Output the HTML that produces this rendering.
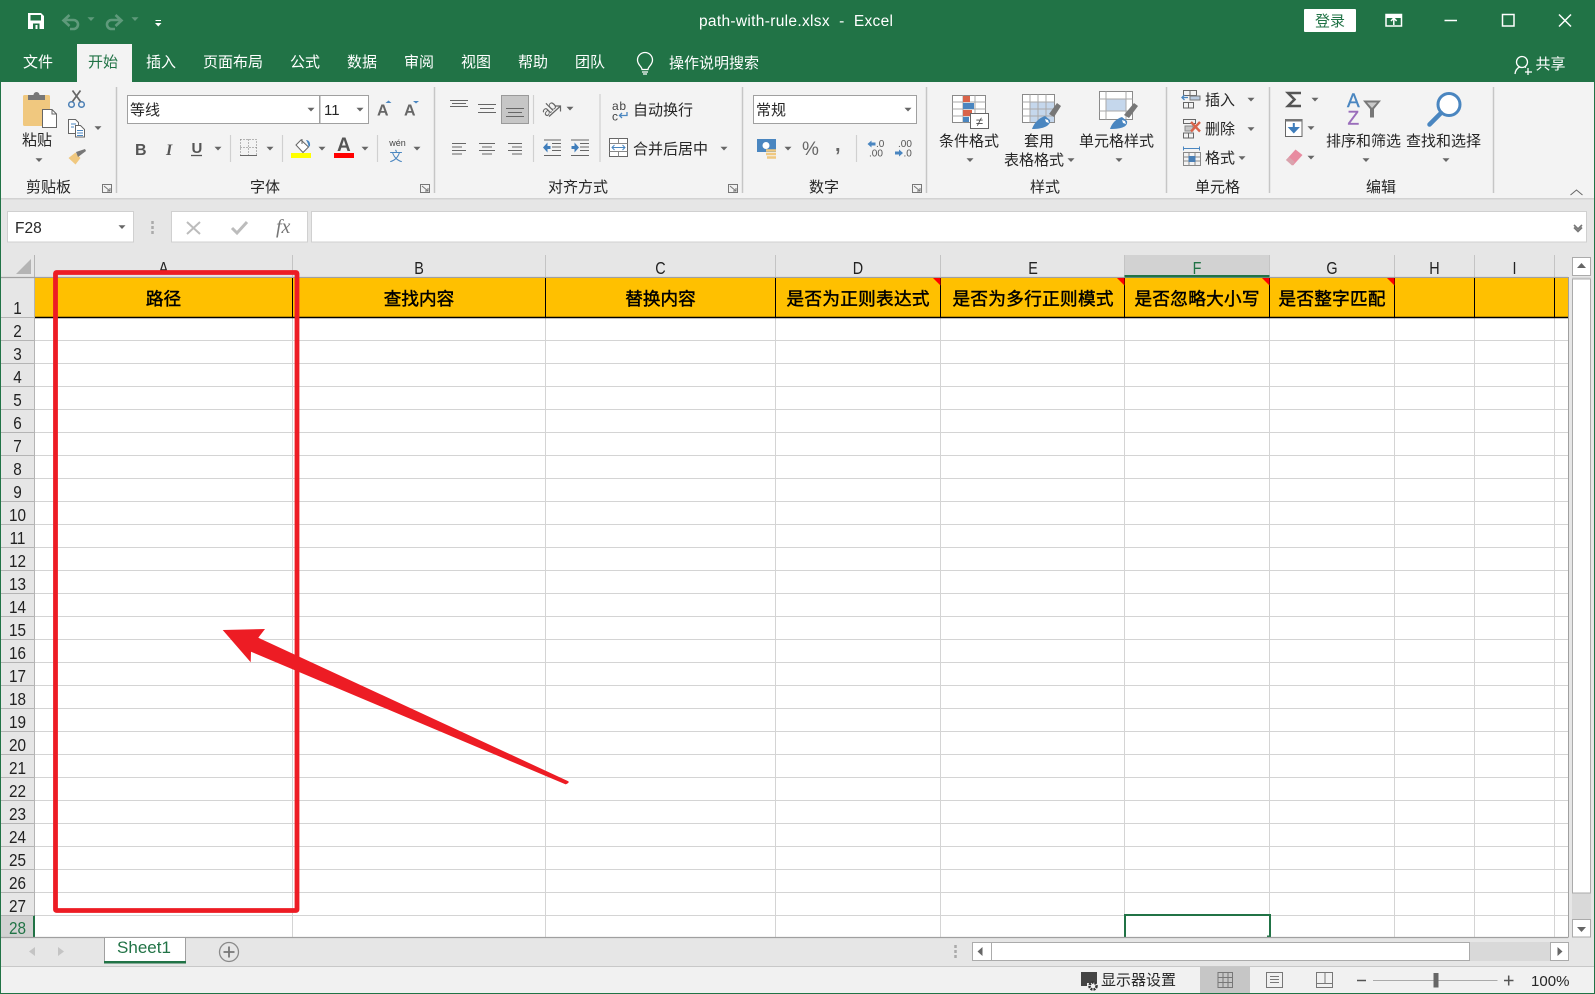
<!DOCTYPE html>
<html lang="zh-CN"><head><meta charset="utf-8"><title>path-with-rule.xlsx - Excel</title>
<style>
html,body{margin:0;padding:0;background:#fff}
body{width:1595px;height:994px;overflow:hidden;position:relative}
#grid{position:absolute;left:34px;top:318px;width:1534px;height:620px;background:repeating-linear-gradient(to bottom,#fff 0,#fff 22px,#d4d4d4 22px,#d4d4d4 23px)}
svg{position:absolute;left:0;top:0}
text{font-family:"Liberation Sans","Noto Sans CJK SC",sans-serif;fill:#262626;font-size:15px}
.w text,.w{fill:#fff}
.c{text-anchor:middle}
.h{font-size:17.6px;font-weight:400;fill:#000;stroke:#000;stroke-width:.45px;text-anchor:middle}
.r{font-size:18px;text-anchor:middle;fill:#222}
.l{stroke:#666;stroke-width:1;fill:none}
.s{stroke:#c6c6c6;stroke-width:1.5}
</style></head><body>
<div id="grid"></div>
<svg width="1595" height="994" viewBox="0 0 1595 994" shape-rendering="geometricPrecision">
<defs><path id="a" d="M-3.5-1.8h7L0 2z" fill="#666"/><path id="d" d="M-3.5-1.8h7L0 2z" fill="#5f9a7b"/></defs>
<!-- title and tabs -->
<rect width="1595" height="82" fill="#217346"/>
<rect x="77" y="44" width="55" height="38" fill="#f3f3f3"/>
<rect y="82" width="1595" height="117" fill="#f3f3f3"/>
<rect y="198" width="1595" height="1.5" fill="#d2d2d2"/>
<rect y="199.500" width="1595" height="57" fill="#e6e6e6"/>
<!-- save -->
<path d="M28 13h13l3 3v13H28z" fill="#fff"/><rect x="30.500" y="15" width="10.500" height="5.500" fill="#217346"/><rect x="33" y="23.500" width="6.500" height="5.500" fill="#217346"/><rect x="35.500" y="25" width="2" height="4" fill="#fff"/>
<path d="M64 20h9.500a4.500 4.500 0 0 1 0 9H70M69.500 15l-6 5.500 6 5.500" fill="none" stroke="#5f9a7b" stroke-width="2.600"/><use href="#d" x="91" y="19"/>
<path d="M121 20h-9.500a4.500 4.500 0 0 0 0 9h3.500M115.500 15l6 5.500-6 5.500" fill="none" stroke="#5f9a7b" stroke-width="2.600"/><use href="#d" x="135" y="19"/>
<path d="M155.500 20.500h5.500" stroke="#fff" stroke-width="1"/><path d="M155 23h6.500l-3.200 3.500z" fill="#fff"/>
<text class="w" x="699" y="26" font-size="15.500" textLength="194" xml:space="preserve" style="fill:#fff;font-size:15.500px">path-with-rule.xlsx  -  Excel</text>
<rect x="1304" y="9" width="52" height="23" rx="1" fill="#fff"/><text x="1315" y="26" style="fill:#217346">登录</text>
<g fill="none" stroke="#fff" stroke-width="1.500"><rect x="1386" y="14.500" width="15.500" height="11.500"/><path d="M1386 16.500h15.500" stroke-width="3"/><path d="M1393.800 25v-6M1391 21l2.800-3 2.800 3"/><path d="M1444.500 20.500h12.500"/><rect x="1502.500" y="14.500" width="11.500" height="11.500"/><path d="M1559 14.500l12 12M1571 14.500l-12 12"/></g>
<g style="fill:#fff"><text x="23" y="67" style="fill:#fff">文件</text><text x="88" y="67" style="fill:#217346">开始</text><text x="146" y="67" style="fill:#fff">插入</text><text x="203" y="67" style="fill:#fff">页面布局</text><text x="290" y="67" style="fill:#fff">公式</text><text x="347" y="67" style="fill:#fff">数据</text><text x="404" y="67" style="fill:#fff">审阅</text><text x="461" y="67" style="fill:#fff">视图</text><text x="518" y="67" style="fill:#fff">帮助</text><text x="575" y="67" style="fill:#fff">团队</text><text x="669" y="68" style="fill:#fff">操作说明搜索</text><text x="1535.500" y="69" style="fill:#fff">共享</text></g>
<path d="M642 69.500c0-3-4.500-4.500-4.500-9.500a7.500 7.500 0 0 1 15 0c0 5-4.500 6.500-4.500 9.500zM642 72h6M643 74h4" fill="none" stroke="#fff" stroke-width="1.300"/>
<g fill="none" stroke="#fff" stroke-width="1.300"><circle cx="1522" cy="62" r="5.500"/><path d="M1515 74c.5-4.500 2.500-6 4.500-7M1525 67l1 .5M1528 68v7M1525 72h7"/></g>
<!-- separators -->
<g stroke="#c6c6c6" stroke-width="1.500"><path d="M116.500 87v106M434.500 87v106M742.500 87v106M926.500 87v106M1166.500 87v106M1269.500 87v106M1493.500 87v106"/></g>
<g stroke="#d0d0d0" stroke-width="1.200"><path d="M230.500 135v27M282.500 135v27M377.500 135v27M533.500 95v29M533.500 135v27M600 94v68M856.500 135v27"/></g>
<!-- clipboard -->
<rect x="23" y="95" width="27" height="31" rx="1.500" fill="#f0c87f"/><path d="M28 100v-5h5.500a3 3 0 0 1 6 0H45v5z" fill="#777"/>
<path d="M42.500 109.500h9.500l4.500 4.500v13.500h-14z" fill="#fff" stroke="#666"/><path d="M52 109.500v4.500h4.500" fill="none" stroke="#666"/>
<g fill="none" stroke="#4a7fb5" stroke-width="1.500"><circle cx="71.500" cy="104.500" r="2.800"/><circle cx="81.500" cy="104.500" r="2.800"/></g><path d="M72.500 101.500l8-11M80.500 101.500l-8-11" stroke="#666" stroke-width="1.700"/>
<path d="M68.500 119.500h7l3 3v11h-10z" fill="#fff" stroke="#666"/><path d="M71 124h5M71 127h3" stroke="#4a86c0"/><path d="M75.500 125.500h5l4 4v7.500h-9z" fill="#fff" stroke="#666"/><path d="M77 130.500h6M77 133h6M77 135.500h6" stroke="#4a86c0"/><use href="#a" x="98" y="128"/>
<path d="M68.500 158l7-5.500 5 5.500-5 6.500z" fill="#f0c87f"/><path d="M76 152l9-3 1 2-8 6z" fill="#777"/>
<text x="22" y="145">粘贴</text><use href="#a" x="39" y="160"/>
<text x="26" y="192">剪贴板</text><text x="250" y="192">字体</text><text x="548" y="192">对齐方式</text><text x="809" y="192">数字</text><text x="1030" y="192">样式</text><text x="1195" y="192">单元格</text><text x="1366" y="192">编辑</text>
<g fill="none" stroke="#777"><path d="M102.500 184.500h9v8h-9zM104 186l6 5M110 188v3h-3"/><path d="M420.500 184.500h9v8h-9zM422 186l6 5M428 188v3h-3"/><path d="M728.500 184.500h9v8h-9zM730 186l6 5M736 188v3h-3"/><path d="M912.500 184.500h9v8h-9zM914 186l6 5M920 188v3h-3"/></g>
<!-- font -->
<rect x="127.500" y="95.500" width="192" height="28" fill="#fff" stroke="#a0a0a0"/><rect x="320" y="95.500" width="48.500" height="28" fill="#fff" stroke="#a0a0a0"/>
<text x="130" y="115">等线</text><text x="324" y="115">11</text><use href="#a" x="311" y="109.500"/><use href="#a" x="360" y="109.500"/>
<text x="377" y="115.500" style="font-size:16px;font-weight:700;fill:#666">A</text><path d="M385.500 103l3-2.500 3 2.500z" fill="#4a86c0"/>
<text x="404" y="115.500" style="font-size:16px;font-weight:700;fill:#666">A</text><path d="M413 101h6l-3 2.500z" fill="#4a86c0"/>
<text x="135" y="155" style="font-size:16px;font-weight:700;fill:#555">B</text><text x="166" y="155" style="font-size:16px;font-weight:700;font-style:italic;font-family:'Liberation Serif',serif;fill:#555">I</text><text x="191.500" y="153" style="font-size:15px;font-weight:700;fill:#555">U</text><path d="M191 155.500h11" stroke="#555" stroke-width="1.300"/>
<use href="#a" x="218" y="148.500"/><use href="#a" x="270" y="148.500"/><use href="#a" x="322" y="148.500"/><use href="#a" x="365" y="148.500"/><use href="#a" x="417" y="148.500"/>
<path d="M240.500 139.500h16v16M240.500 139.500v16M248.500 139.500v16M240.500 147.500h16" fill="none" stroke="#777" stroke-dasharray="1 2"/><path d="M240 155.500h17" stroke="#666"/>
<path d="M296 145l5-5 7.500 7-5.500 5.500z" fill="#fff" stroke="#666"/><path d="M302 139v5" stroke="#666"/><path d="M306 140c3 0 4.500 2.500 4 6l-1.500 1c0-2.500-1-4.500-2.500-7z" fill="#4a86c0"/><rect x="291" y="153" width="20" height="5" fill="#ffff00"/>
<text x="337" y="151" style="font-size:19px;font-weight:700;fill:#555">A</text><rect x="334" y="153" width="20" height="5" fill="#ff0000"/>
<text x="397.500" y="146" class="c" style="font-size:9px;fill:#444">wén</text><text x="396" y="161" class="c" style="font-size:13px;fill:#4a86c0">文</text>
<!-- alignment -->
<rect x="501.500" y="95.500" width="27" height="28" fill="#c6c6c6" stroke="#9a9a9a"/>
<path class="l" d="M450 100.500h18M452 103.500h14M450 106.500h18M478 104.500h18M480 108.500h14M478 112.500h18M506 108.500h18M508 112.500h14M506 116.500h18M452 143.500h14M452 147h10M452 150.500h14M452 154h10M479 143.500h16M482 147h10M479 150.500h16M482 154h10M508 143.500h14M512 147h10M508 150.500h14M512 154h10"/>
<path class="l" d="M552 143.500h9M552 147h9M552 150.500h9M544 140h17M544 155.500h17"/>
<path d="M550.500 146h-3v-3.500l-4.500 5 4.500 5v-3.500h3z" fill="#3f7dbb"/>
<path class="l" d="M571 140h18M580 143.500h9M580 147h9M580 150.500h9M571 155.500h18"/>
<path d="M571.500 146h3v-3.500l4.500 5-4.500 5v-3.500h-3z" fill="#3f7dbb"/>
<text x="541" y="112" transform="rotate(-45 550 108)" style="font-size:14px;fill:#666">ab</text><path d="M549 116.500l11-10M555 106h5.500v5.500" fill="none" stroke="#666" stroke-width="1.200"/><use href="#a" x="570" y="108.500"/>
<text x="612" y="110" style="font-size:12px;fill:#444" textLength="14">ab</text><text x="612" y="120.500" style="font-size:12px;fill:#444">c</text><path d="M627 112v3.500h-7M622 113l-2.500 2.500 2.500 2.500" fill="none" stroke="#4a86c0" stroke-width="1.300"/>
<text x="633" y="115">自动换行</text>
<rect x="609.500" y="138.500" width="18" height="18" fill="#fff" stroke="#666"/><path d="M609.500 143.500h18M609.500 151.500h18M618.500 138.500v5M618.500 151.500v5" stroke="#888"/><path d="M612 147.500h13M614.500 145l-2.500 2.500 2.500 2.500M622.500 145l2.500 2.500-2.500 2.500" fill="none" stroke="#4a86c0"/>
<text x="633" y="154">合并后居中</text><use href="#a" x="724" y="148.500"/>
<!-- number -->
<rect x="753.500" y="95.500" width="163" height="28" fill="#fff" stroke="#a0a0a0"/><text x="756" y="115">常规</text><use href="#a" x="908" y="109.500"/>
<rect x="757" y="139" width="19" height="13" fill="#4a86c0"/><circle cx="766" cy="145.500" r="3.500" fill="#fff"/><path d="M766 150.500h10M766 154h10M767 157.500h9" stroke="#f0c87f" stroke-width="2.500"/><use href="#a" x="788" y="148.500"/>
<text x="802" y="155" style="font-size:19px;fill:#666">%</text><text x="835" y="151" style="font-size:20px;font-weight:700;fill:#666">,</text>
<path d="M867.500 144l4-3.500v2h4v3h-4v2z" fill="#4a86c0"/><text x="876" y="147" style="font-size:10px;fill:#555">.0</text><text x="869" y="156.500" style="font-size:10px;fill:#555">.00</text>
<text x="898" y="147" style="font-size:10px;fill:#555">.00</text><path d="M895 151.500h4v-2l4 3.500-4 3.500v-2h-4z" fill="#4a86c0"/><text x="903.500" y="156.500" style="font-size:10px;fill:#555">.0</text>
<!-- styles -->
<g>
<rect x="952.500" y="95.500" width="33" height="27" fill="#fff" stroke="#8a8a8a"/><path d="M952.500 102h33M952.500 109h33M952.500 116h33M963 95.500v27M975 95.500v27" stroke="#aaa"/>
<rect x="963" y="96" width="7" height="6" fill="#d9644a"/><rect x="963" y="103" width="11" height="6" fill="#4a86c0"/><rect x="963" y="110" width="9" height="6" fill="#d9644a"/><rect x="963" y="117" width="6" height="5" fill="#4a86c0"/>
<rect x="970.500" y="113.500" width="18" height="15" fill="#fff" stroke="#666"/><text x="979.500" y="126" class="c" style="font-size:13px;fill:#444">≠</text>
<rect x="1022.500" y="94.500" width="32" height="28" fill="#fff" stroke="#8a8a8a"/><rect x="1030" y="102" width="24" height="20" fill="#c5d7ec"/><path d="M1022.500 102h32M1022.500 109h32M1022.500 116h32M1030 94.500v28M1038 94.500v28M1046 94.500v28" stroke="#aaa"/>
<path d="M1032 129c2-6 7-11 13-13l5 4c1 5-5 9-18 9z" fill="#4a86c0"/><path d="M1045 119l3 1 1 3-3-1z" fill="#fff"/><path d="M1057 103l4 3-7 11-5-3z" fill="#777"/>
<rect x="1099.500" y="91.500" width="33" height="28" fill="#fff" stroke="#8a8a8a"/><rect x="1106" y="99" width="20" height="12" fill="#c5d7ec"/><path d="M1099.500 99h33M1099.500 111h33M1106 91.500v28M1126 91.500v28" stroke="#aaa"/>
<path d="M1110 129c2-6 6-10 12-12l5 4c1 5-4 8-17 8z" fill="#4a86c0"/><path d="M1122 120l3 1 1 3-3-1z" fill="#fff"/><path d="M1134 103l4 3-9 12-5-3z" fill="#777"/>
</g>
<text x="939" y="146">条件格式</text><use href="#a" x="970" y="160"/><text x="1024" y="146">套用</text><text x="1004" y="165">表格格式</text><use href="#a" x="1071" y="160"/><text x="1079" y="146">单元格样式</text><use href="#a" x="1119" y="160"/>
<!-- cells -->
<g fill="none" stroke="#666"><path d="M1183.500 90.500h13v5h-13zM1190 90.500v5M1183.500 102.500h10v5.500h-10zM1188.500 102.500v5.500"/><path d="M1183.500 119.500h12v4h-12zM1183.500 133h10v5h-10zM1188.500 133v5"/><path d="M1183.500 152.500h17v13h-17zM1183.500 157h17M1183.500 161h17M1189 152.500v13M1195 152.500v13" stroke="#888"/></g>
<path d="M1182 97.500h6M1184.500 95l-2.500 2.500 2.500 2.500" fill="none" stroke="#4a86c0" stroke-width="1.300"/><rect x="1190" y="96" width="10" height="4" fill="#b9cbe0" stroke="#777"/>
<rect x="1185" y="126" width="8" height="5" fill="#c6c6c6" stroke="#888"/><path d="M1191 122l9 9.500M1200 122l-9 9.500" stroke="#d9644a" stroke-width="2.400"/>
<path d="M1183 148.500h17M1183.500 146.500v4M1199.500 146.500v4" stroke="#4a86c0"/><rect x="1188.500" y="156" width="7" height="6" fill="#4a7fb5"/>
<text x="1205" y="105">插入</text><text x="1205" y="134">删除</text><text x="1205" y="163">格式</text><use href="#a" x="1251" y="99.500"/><use href="#a" x="1251" y="129"/><use href="#a" x="1242" y="158"/>
<!-- editing -->
<path d="M1301 93h-13l6.500 6.500-6.500 6.500h13" fill="none" stroke="#555" stroke-width="2.500"/><use href="#a" x="1315" y="99.500"/>
<rect x="1285.500" y="119.500" width="16.500" height="17" fill="#fff" stroke="#666"/><rect x="1285.500" y="119" width="16.500" height="2.500" fill="#777"/><path d="M1293.800 123v8M1290 128l3.800 4 3.800-4z" fill="#3f7dbb" stroke="#3f7dbb" stroke-width="2"/><use href="#a" x="1311" y="128"/>
<path d="M1286 160l9.500-10.500 7 5.500-9.500 10.500z" fill="#e88ba0"/><path d="M1286 160l3-3 6 5-3 3.500z" fill="#d9a3ad"/><use href="#a" x="1311" y="157.500"/>
<text x="1347" y="107" style="font-size:19px;fill:#4a86c0;stroke:#4a86c0;stroke-width:.4px">A</text><text x="1347.500" y="124.500" style="font-size:19px;fill:#9a6dbb;stroke:#9a6dbb;stroke-width:.4px">Z</text>
<path d="M1363 100.500h18l-7 8.500v8.500h-4v-8.500z" fill="#777"/><path d="M1367 102.500h10l-5 5.500z" fill="#c8c8c8"/>
<text x="1326" y="146">排序和筛选</text><text x="1406" y="146">查找和选择</text><use href="#a" x="1366" y="160"/><use href="#a" x="1446" y="160"/>
<circle cx="1449" cy="104.500" r="11" fill="#fff" stroke="#4a86c0" stroke-width="3"/><path d="M1441 113l-11.500 11.500" stroke="#4a86c0" stroke-width="4.500" stroke-linecap="round"/>
<path d="M1570.500 195l6-5 6 5" fill="none" stroke="#666"/>
<!-- formula bar -->
<rect x="7.500" y="211.500" width="126" height="30.500" fill="#fff" stroke="#d0d0d0"/><text x="15" y="233" style="font-size:15.500px">F28</text><use href="#a" x="122" y="227"/>
<path d="M152.500 221v3M152.500 226v3M152.500 231v3" stroke="#aaa" stroke-width="2.500"/>
<rect x="171.500" y="211.500" width="136" height="30.500" fill="#fff" stroke="#d0d0d0"/><rect x="311.500" y="211.500" width="1275" height="30.500" fill="#fff" stroke="#d0d0d0"/>
<path d="M187 222l13 12M200 222l-13 12" stroke="#bcbcbc" stroke-width="2"/><path d="M232 228l5 5 10-11" fill="none" stroke="#bcbcbc" stroke-width="3"/>
<text x="276" y="233" style="font-family:'Liberation Serif',serif;font-size:20px;font-style:italic;fill:#777">fx</text>
<path d="M1574 225l4 4 4-4M1574 227.500l4 4 4-4" fill="none" stroke="#777" stroke-width="1.600"/>
<!-- sheet headers -->
<rect x="0" y="255" width="1568" height="22.500" fill="#e6e6e6"/><rect x="1124.500" y="255" width="145" height="22.500" fill="#d2d2d2"/>
<rect x="1" y="255" width="33.500" height="683" fill="#e6e6e6"/><rect x="1" y="915.500" width="33.500" height="22" fill="#d2d2d2"/>
<path d="M31 259v15H16z" fill="#b4b4b4"/>
<path d="M34.500 255v683" stroke="#b4b4b4"/><path d="M34 915.500v22" stroke="#217346" stroke-width="2"/>
<path d="M292.500 255v22M545.500 255v22M775.500 255v22M940.500 255v22M1124.500 255v22M1269.500 255v22M1394.500 255v22M1474.500 255v22M1554.500 255v22" stroke="#c4c4c4"/>
<path d="M1 277.500h1567" stroke="#a0a0a0" stroke-width="1.300"/><rect x="1124.500" y="275" width="145" height="2.500" fill="#217346"/>
<path d="M1 340.500h33M1 363.500h33M1 386.500h33M1 409.500h33M1 432.500h33M1 455.500h33M1 478.500h33M1 501.500h33M1 524.500h33M1 547.500h33M1 570.500h33M1 593.500h33M1 616.500h33M1 639.500h33M1 662.500h33M1 685.500h33M1 708.500h33M1 731.500h33M1 754.500h33M1 777.500h33M1 800.500h33M1 823.500h33M1 846.500h33M1 869.500h33M1 892.500h33M1 915.500h33M1 317.500h33" stroke="#b4b4b4"/>
<g stroke="#d4d4d4"><path d="M292.500 318v620M545.500 318v620M775.500 318v620M940.500 318v620M1124.500 318v620M1269.500 318v620M1394.500 318v620M1474.500 318v620M1554.500 318v620"/></g>
<rect x="35" y="278" width="1533" height="39" fill="#ffc000"/>
<path d="M292.500 278v39M545.500 278v39M775.500 278v39M940.500 278v39M1124.500 278v39M1269.500 278v39M1394.500 278v39M1474.500 278v39M1554.500 278v39" stroke="#000"/>
<path d="M35 317.500h1533" stroke="#000" stroke-width="1.600"/>
<g fill="#ff0000"><path d="M933 278h7.500v7.500zM1117 278h7.500v7.500zM1262 278h7.500v7.500zM1387 278h7.500v7.500z"/></g>
<g>
<text class="h" x="163.500" y="305">路径</text><text class="h" x="419" y="305">查找内容</text><text class="h" x="660.500" y="305">替换内容</text><text class="h" x="858" y="305" textLength="143">是否为正则表达式</text><text class="h" x="1033" y="305" textLength="161">是否为多行正则模式</text><text class="h" x="1197" y="305" textLength="125">是否忽略大小写</text><text class="h" x="1332" y="305" textLength="107">是否整字匹配</text>
</g>
<g class="r">
<text class="r" transform="translate(163.500,274) scale(.8,1)">A</text><text class="r" transform="translate(419,274) scale(.8,1)">B</text><text class="r" transform="translate(660.500,274) scale(.8,1)">C</text><text class="r" transform="translate(858,274) scale(.8,1)">D</text><text class="r" transform="translate(1033,274) scale(.8,1)">E</text><text class="r" transform="translate(1197,274) scale(.8,1)" style="fill:#217346">F</text><text class="r" transform="translate(1332,274) scale(.8,1)">G</text><text class="r" transform="translate(1434.500,274) scale(.8,1)">H</text><text class="r" transform="translate(1514.500,274) scale(.8,1)">I</text>
<text class="r" transform="translate(17.500,314) scale(.85,1)">1</text><text class="r" transform="translate(17.500,337) scale(.85,1)">2</text><text class="r" transform="translate(17.500,360) scale(.85,1)">3</text><text class="r" transform="translate(17.500,383) scale(.85,1)">4</text><text class="r" transform="translate(17.500,406) scale(.85,1)">5</text><text class="r" transform="translate(17.500,429) scale(.85,1)">6</text><text class="r" transform="translate(17.500,452) scale(.85,1)">7</text><text class="r" transform="translate(17.500,475) scale(.85,1)">8</text><text class="r" transform="translate(17.500,498) scale(.85,1)">9</text><text class="r" transform="translate(17.500,521) scale(.85,1)">10</text><text class="r" transform="translate(17.500,544) scale(.85,1)">11</text><text class="r" transform="translate(17.500,567) scale(.85,1)">12</text><text class="r" transform="translate(17.500,590) scale(.85,1)">13</text><text class="r" transform="translate(17.500,613) scale(.85,1)">14</text><text class="r" transform="translate(17.500,636) scale(.85,1)">15</text><text class="r" transform="translate(17.500,659) scale(.85,1)">16</text><text class="r" transform="translate(17.500,682) scale(.85,1)">17</text><text class="r" transform="translate(17.500,705) scale(.85,1)">18</text><text class="r" transform="translate(17.500,728) scale(.85,1)">19</text><text class="r" transform="translate(17.500,751) scale(.85,1)">20</text><text class="r" transform="translate(17.500,774) scale(.85,1)">21</text><text class="r" transform="translate(17.500,797) scale(.85,1)">22</text><text class="r" transform="translate(17.500,820) scale(.85,1)">23</text><text class="r" transform="translate(17.500,843) scale(.85,1)">24</text><text class="r" transform="translate(17.500,866) scale(.85,1)">25</text><text class="r" transform="translate(17.500,889) scale(.85,1)">26</text><text class="r" transform="translate(17.500,912) scale(.85,1)">27</text><text class="r" transform="translate(17.500,934) scale(.85,1)" style="fill:#217346">28</text>
</g>
<!-- selection -->
<path d="M1125 938v-23h145v22" fill="none" stroke="#217346" stroke-width="2"/><rect x="1267" y="935.500" width="4" height="2" fill="#217346"/>
<!-- vertical scrollbar -->
<rect x="1568" y="256" width="27" height="682" fill="#e6e6e6"/><path d="M1568.500 277v661" stroke="#a0a0a0"/>
<rect x="1572" y="277" width="19" height="642" fill="#d9d9d9"/>
<rect x="1572.500" y="279" width="18" height="614" fill="#fff" stroke="#ababab"/>
<rect x="1572.500" y="257.500" width="18" height="18" fill="#fff" stroke="#ababab"/><path d="M1581.500 263l-4.500 5h9z" fill="#666"/>
<rect x="1572.500" y="919.500" width="18" height="17.500" fill="#fff" stroke="#ababab"/><path d="M1581.500 932l-4.500-5h9z" fill="#666"/>
<!-- tabs strip -->
<rect x="1" y="937.500" width="1593" height="29" fill="#e6e6e6"/><path d="M0 937.500h1568" stroke="#a0a0a0" stroke-width="1.200"/>
<rect x="104.500" y="937.500" width="81" height="25" fill="#fff" stroke="#a0a0a0"/><rect x="104" y="961" width="82" height="2.500" fill="#217346"/>
<text x="117" y="953" style="font-size:17px;fill:#217346" textLength="54">Sheet1</text>
<path d="M35 947l-6 4.500 6 4.500zM58 947l6 4.500-6 4.500z" fill="#c4c4c4"/>
<circle cx="229" cy="952" r="9.500" fill="none" stroke="#8a8a8a" stroke-width="1.300"/><path d="M229 946.500v11M223.500 952h11" stroke="#777" stroke-width="1.800"/>
<path d="M955.500 945v3M955.500 950v3M955.500 955v3" stroke="#aaa" stroke-width="2.500"/>
<rect x="972" y="942" width="597" height="19" fill="#d9d9d9"/>
<rect x="972.500" y="942.500" width="19" height="18" fill="#fff" stroke="#ababab"/><path d="M977.500 951.500l5-4.500v9z" fill="#666"/>
<rect x="991.500" y="942.500" width="478" height="18" fill="#fff" stroke="#ababab"/>
<rect x="1550.500" y="942.500" width="18" height="18" fill="#fff" stroke="#ababab"/><path d="M1562.500 951.500l-5-4.500v9z" fill="#666"/>
<!-- status bar -->
<rect x="1" y="966.500" width="1593" height="27" fill="#f1f1f1"/><path d="M1 966.500h1593" stroke="#c8c8c8"/>
<rect x="1200" y="967" width="50" height="26" fill="#c6c6c6"/>
<path d="M1081 972h16v11h-10v3h-6z" fill="#444"/><circle cx="1093" cy="986" r="3.500" fill="#f1f1f1" stroke="#333" stroke-width="2.500" stroke-dasharray="2 1"/><text x="1101" y="985">显示器设置</text>
<path d="M1218 972.500h14.500v15H1218zM1218 977.500h14.500M1218 982.500h14.500M1223 972.500v15M1228 972.500v15" fill="none" stroke="#777"/>
<path d="M1266.500 972.500h16v15h-16zM1270 976.500h9M1270 979.500h9M1270 982.500h9" fill="none" stroke="#777"/>
<path d="M1316.500 972.500h16v15h-16zM1316.500 983.500h16M1325 972.500v11" fill="none" stroke="#777"/>
<path d="M1357 980.500h9M1504 980.500h9.500M1508.700 975.500v10" stroke="#555" stroke-width="1.500"/><path d="M1373 980.500h124.500" stroke="#aaa"/><rect x="1433.500" y="973" width="5" height="14.500" fill="#666"/>
<text x="1531" y="986" textLength="38.500">100%</text>
<!-- red annotations -->
<rect x="55.500" y="272.500" width="241.500" height="638" rx="1" fill="none" stroke="#ed1c24" stroke-width="4.800" stroke-linejoin="round"/>
<path d="M222.700 630l42.300-1-6.700 8.700 310 143.500q1.500 1.500-2.600 3.200L251 651.700l-.3 10.600z" fill="#ed1c24"/>
<!-- window border -->
<path d="M.5 82v912M1594.500 82v912" stroke="#217346"/><path d="M0 993.500h1595" stroke="#217346"/>
</svg>
</body></html>
